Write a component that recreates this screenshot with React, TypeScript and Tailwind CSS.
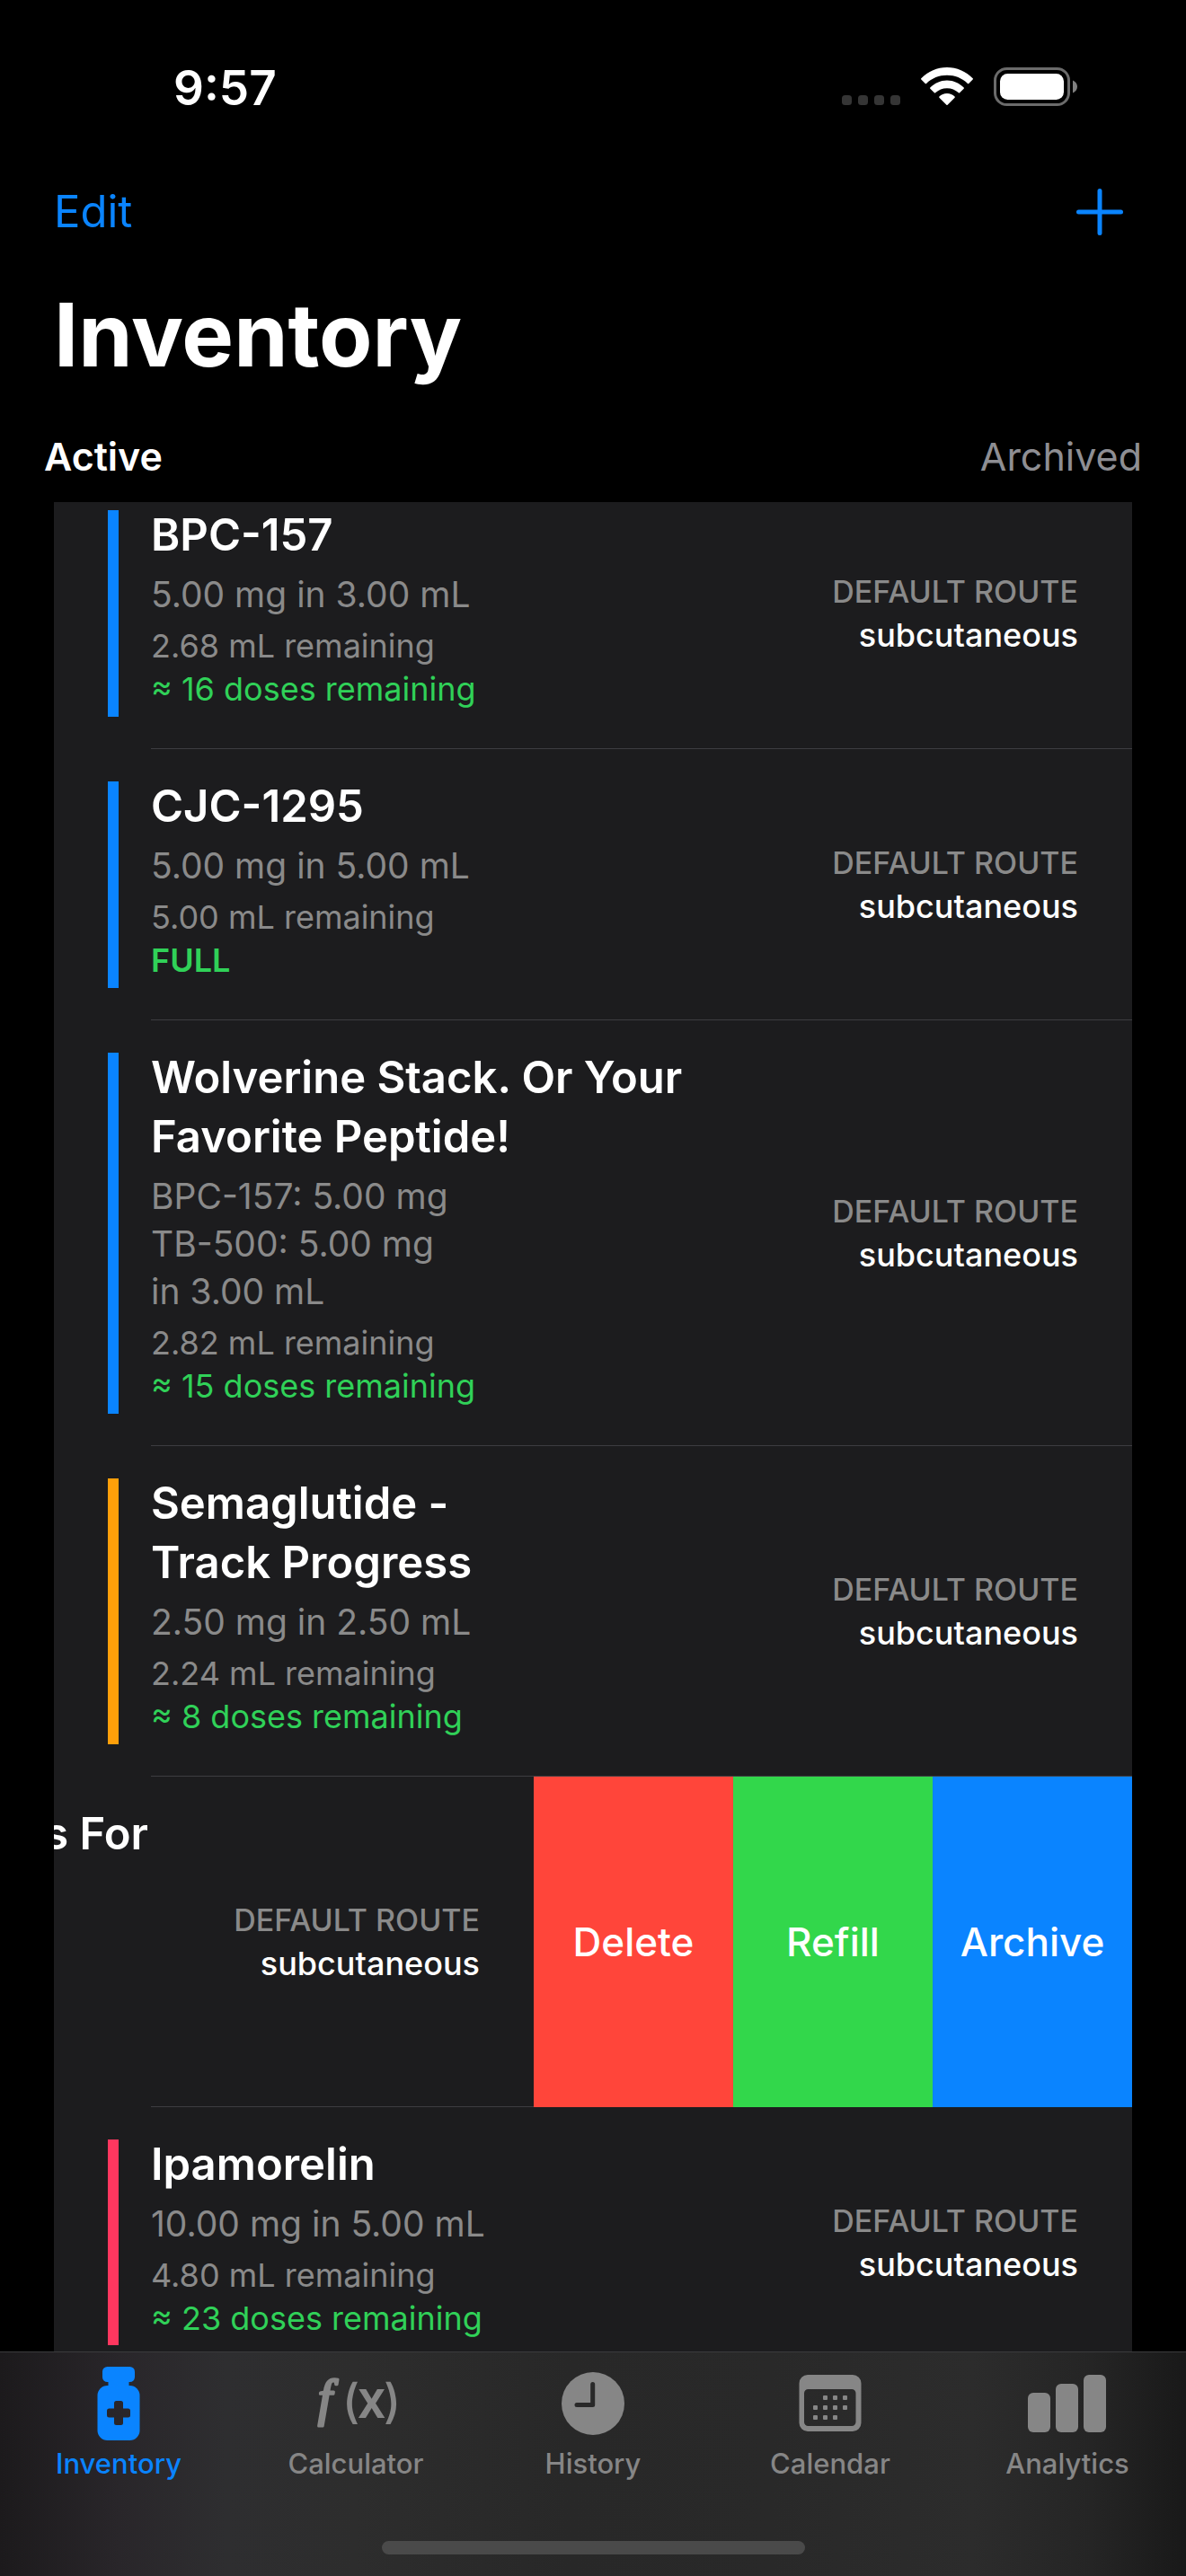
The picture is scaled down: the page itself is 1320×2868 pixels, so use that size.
import React from 'react';

type Vial = {
  name: string[];
  contents: string[];
  remaining: string;
  doses: string;
  full?: boolean;
  bar: string;
};

const BLUE = 'bg-[#0a84ff]';

const vials: Vial[] = [
  { name: ['BPC-157'], contents: ['5.00 mg in 3.00 mL'], remaining: '2.68 mL remaining', doses: '≈ 16 doses remaining', bar: BLUE },
  { name: ['CJC-1295'], contents: ['5.00 mg in 5.00 mL'], remaining: '5.00 mL remaining', doses: 'FULL', full: true, bar: BLUE },
  {
    name: ['Wolverine Stack. Or Your', 'Favorite Peptide!'],
    contents: ['BPC-157: 5.00 mg', 'TB-500: 5.00 mg', 'in 3.00 mL'],
    remaining: '2.82 mL remaining',
    doses: '≈ 15 doses remaining',
    bar: BLUE,
  },
  {
    name: ['Semaglutide -', 'Track Progress'],
    contents: ['2.50 mg in 2.50 mL'],
    remaining: '2.24 mL remaining',
    doses: '≈ 8 doses remaining',
    bar: 'bg-[#ff9f0a]',
  },
];

const ipamorelin: Vial = {
  name: ['Ipamorelin'],
  contents: ['10.00 mg in 5.00 mL'],
  remaining: '4.80 mL remaining',
  doses: '≈ 23 doses remaining',
  bar: 'bg-[#ff375f]',
};

function CellularIcon() {
  return (
    <svg width="65" height="43" viewBox="0 0 65 43" fill="#353535" aria-hidden="true">
      {[0, 18, 36, 54].map((x) => (
        <rect key={x} x={x} y="31" width="11" height="11" rx="3.5" />
      ))}
    </svg>
  );
}

function WifiIcon() {
  return (
    <svg width="58" height="43" viewBox="0 0 58 43" fill="#fff" aria-hidden="true">
      <path d="M0.3 12.2C8 4.6 18 0 29 0s21 4.6 28.7 12.2c.4.4.4.8 0 1.2l-4.5 4.6c-.4.4-.8.4-1.2 0C45.8 12 37.7 8.8 29 8.8S12.2 12 6 18c-.4.4-.8.4-1.2 0L.3 13.4c-.4-.4-.4-.8 0-1.2z" />
      <path d="M10.3 22.5C15.3 17.5 21.8 14.5 29 14.5s13.7 3 18.7 8c.4.4.4.8 0 1.2l-4.6 4.6c-.4.4-.8.4-1.2 0-3.5-3.3-8-5.1-12.9-5.1s-9.4 1.8-12.900 5.1c-.4.4-.8.4-1.200 0l-4.600-4.600c-.4-.4-.4-.8 0-1.200z" />
      <path d="M20.4 32.6C22.6 30.4 25.6 29 29 29s6.4 1.4 8.6 3.6c.4.4.4.8 0 1.2l-8 8c-.4.4-.8.4-1.2 0l-8-8c-.4-.4-.4-.8 0-1.2z" />
    </svg>
  );
}

function BatteryIcon() {
  return (
    <svg width="93" height="43" viewBox="0 0 93 43" aria-hidden="true">
      <rect x="1.5" y="1.5" width="82" height="40" rx="13" fill="none" stroke="#6b6b6b" strokeWidth="3" />
      <rect x="7" y="7" width="71" height="29" rx="8.5" fill="#fff" />
      <path d="M88 14.5c3 1.2 5 3.8 5 7s-2 5.800-5 7z" fill="#808080" />
    </svg>
  );
}

function VialIcon() {
  return (
    <svg width="100" height="82" viewBox="0 0 100 82" fill="currentColor" aria-hidden="true">
      <mask id="vial-cross">
        <rect width="100" height="82" fill="#fff" />
        <rect x="45" y="38" width="10" height="27" rx="2.5" fill="#000" />
        <rect x="37" y="46.5" width="26" height="10" rx="2.5" fill="#000" />
      </mask>
      <g mask="url(#vial-cross)">
        <rect x="32" y="0" width="36" height="17" rx="5.5" />
        <rect x="38.5" y="14" width="23" height="9" />
        <rect x="26.5" y="21" width="47" height="61" rx="11" />
      </g>
    </svg>
  );
}

function FunctionIcon() {
  return (
    <svg width="100" height="82" viewBox="0 0 100 82" fill="currentColor" aria-hidden="true" fontFamily="Inter, sans-serif">
      <text x="8" y="54" fontSize="56" fontStyle="italic" fontFamily="Liberation Serif, serif" stroke="currentColor" strokeWidth="3" strokeLinejoin="round">f</text>
      <text x="35" y="57" fontSize="52" fontWeight="500">(</text>
      <text x="52" y="57" fontSize="62" fontWeight="500" fontFamily="Roboto, sans-serif">x</text>
      <text x="81" y="57" fontSize="52" fontWeight="500">)</text>
    </svg>
  );
}

function ClockIcon() {
  return (
    <svg width="100" height="82" viewBox="0 0 100 82" aria-hidden="true">
      <circle cx="50" cy="41" r="35" fill="currentColor" />
      <path d="M49.7 19.5V42.5H32" fill="none" stroke="#292929" strokeWidth="5" strokeLinecap="round" strokeLinejoin="round" />
    </svg>
  );
}

function CalendarIcon() {
  const dots = [
    [42, 32], [53, 32], [64, 32],
    [31, 43], [42, 43], [53, 43], [64, 43],
    [31, 54], [42, 54], [53, 54],
  ];
  return (
    <svg width="100" height="82" viewBox="0 0 100 82" fill="currentColor" aria-hidden="true">
      <path
        fillRule="evenodd"
        d="M25 9H75a9.5 9.5 0 0 1 9.5 9.5V62.5A9.5 9.5 0 0 1 75 72H25a9.5 9.5 0 0 1-9.5-9.5V18.5A9.5 9.5 0 0 1 25 9zM25.5 25a4.5 4.5 0 0 0-4.5 4.5V61.5a4.5 4.5 0 0 0 4.5 4.5H74a4.5 4.5 0 0 0 4.5-4.5V29.5A4.5 4.5 0 0 0 74 25z"
      />
      {dots.map(([x, y]) => (
        <rect key={`${x}-${y}`} x={x} y={y} width="5" height="5" rx="1" />
      ))}
    </svg>
  );
}

function BarsIcon() {
  return (
    <svg width="100" height="82" viewBox="0 0 100 82" fill="currentColor" aria-hidden="true">
      <rect x="6" y="29" width="25" height="44" rx="6" />
      <rect x="37" y="19" width="25" height="54" rx="6" />
      <rect x="68" y="9" width="25" height="64" rx="6" />
    </svg>
  );
}

function Route() {
  return (
    <div className="flex shrink-0 flex-col justify-center pr-15 text-right font-medium">
      <p className="text-[34px] leading-12 text-[#8a8a8a]">DEFAULT ROUTE</p>
      <p className="text-[36px] leading-12 text-white">subcutaneous</p>
    </div>
  );
}

function VialRow({ vial, last = false }: { vial: Vial; last?: boolean }) {
  return (
    <li className="flex pl-15">
      <div className={`my-9 w-3 shrink-0 ${vial.bar}`} />
      <div className={`ml-9 flex flex-1 justify-between ${last ? '' : 'border-b border-[#3d3d41]'}`}>
        <div className="pt-[31px] pb-[42px] whitespace-nowrap">
          <h2 className="text-[49px] leading-[66px] font-semibold text-white">
            {vial.name.map((line) => (
              <span key={line} className="block">{line}</span>
            ))}
          </h2>
          <div className="mt-1.5 text-[39px] leading-[53px] text-[#8a8a8a]">
            {vial.contents.map((line) => (
              <p key={line}>{line}</p>
            ))}
          </div>
          <p className="mt-[7px] text-[36px] leading-12 text-[#8a8a8a]">{vial.remaining}</p>
          <p className={`text-[36px] leading-12 text-[#30d158] ${vial.full ? 'font-semibold' : ''}`}>{vial.doses}</p>
        </div>
        <Route />
      </div>
    </li>
  );
}

function SwipedRow() {
  return (
    <li className="flex h-[368px]">
      <div className="flex min-w-0 flex-1">
        <div className="flex w-[105px] shrink-0 justify-end overflow-hidden pt-[31px] text-[49px] leading-[66px] font-semibold whitespace-nowrap text-white">
          <h2>s For</h2>
        </div>
        <div className="ml-[3px] flex flex-1 justify-end border-b border-[#3d3d41]">
          <Route />
        </div>
      </div>
      <div className="flex text-[44px] font-medium text-white">
        <button type="button" className="w-[222px] bg-[#ff453a]">Delete</button>
        <button type="button" className="w-[222px] bg-[#32d74b]">Refill</button>
        <button type="button" className="w-[222px] bg-[#0a84ff]">Archive</button>
      </div>
    </li>
  );
}

const tabs = [
  { label: 'Inventory', Icon: VialIcon, active: true },
  { label: 'Calculator', Icon: FunctionIcon },
  { label: 'History', Icon: ClockIcon },
  { label: 'Calendar', Icon: CalendarIcon },
  { label: 'Analytics', Icon: BarsIcon },
];

export default function App() {
  return (
    <div className="flex h-screen flex-col bg-black font-['Inter',sans-serif] text-white">
      <header className="shrink-0">
        <div className="flex items-center justify-between pt-16 pr-[121px] pl-[193px]">
          <time className="text-[53px] leading-[68px] font-semibold">9:57</time>
          <div className="flex gap-[23px] pb-1">
            <CellularIcon />
            <WifiIcon />
            <BatteryIcon />
          </div>
        </div>
        <div className="mt-[70px] flex items-center justify-between px-[60px]">
          <button type="button" className="text-[49px] leading-[68px] text-[#0a84ff]">Edit</button>
          <button type="button" aria-label="Add" className="pr-[9px] text-[#0a84ff]">
            <svg width="54" height="54" viewBox="0 0 54 54" fill="none" stroke="currentColor" strokeWidth="5" strokeLinecap="round" aria-hidden="true">
              <path d="M27 3.5v47M3.5 27h47" />
            </svg>
          </button>
        </div>
        <h1 className="mt-[43px] px-[60px] text-[97px] leading-[120px] font-bold">Inventory</h1>
        <div className="mt-[45px] flex justify-between px-[49px] text-[43px] leading-[60px]">
          <button type="button" className="font-semibold">Active</button>
          <button type="button" className="text-[#8e8e93]">Archived</button>
        </div>
      </header>

      <main className="mt-[21px] min-h-0 flex-1 overflow-hidden px-15">
        <ul className="-mt-[27px] bg-[#1c1c1e]">
          {vials.map((vial) => (
            <VialRow key={vial.name[0]} vial={vial} />
          ))}
          <SwipedRow />
          <VialRow vial={ipamorelin} last />
        </ul>
      </main>

      <nav className="shrink-0 border-t border-[#3b3b3d] bg-[linear-gradient(90deg,#1c1a1c_0%,#29262a_10%,#2e2e30_19%,#2d2d2d_30%,#282828_48%,#292929_65%,#2c2c2c_82%,#252525_92%,#191919_100%)] pt-4 pb-6">
        <ul className="grid grid-cols-5">
          {tabs.map(({ label, Icon, active }) => (
            <li key={label}>
              <a
                href={`#${label.toLowerCase()}`}
                aria-current={active ? 'page' : undefined}
                className={`flex flex-col items-center gap-1.5 ${active ? 'text-[#0a84ff]' : 'text-[#868686]'}`}
              >
                <Icon />
                <span className="text-[31px] leading-10 font-medium">{label}</span>
              </a>
            </li>
          ))}
        </ul>
        <div className="mx-auto mt-[66px] h-[15px] w-[471px] rounded-full bg-[#4a4a4a]" />
      </nav>
    </div>
  );
}
